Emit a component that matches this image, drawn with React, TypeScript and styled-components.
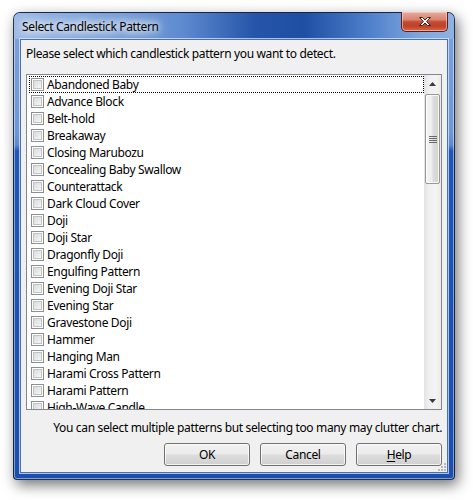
import React from "react";
import styled, { createGlobalStyle } from "styled-components";

const Global = createGlobalStyle`
  html, body { margin: 0; padding: 0; background: #ffffff; }
  body { font-family: "Noto Sans", "Open Sans", sans-serif; }
`;

const Page = styled.div`
  width: 473px;
  height: 500px;
  padding: 12px 0 0 13px;
  box-sizing: border-box;
`;

const Window = styled.div`
  width: 442px;
  height: 468px;
  box-sizing: border-box;
  border: 1px solid rgba(20, 30, 50, 0.85);
  border-radius: 7px 7px 4px 4px;
  padding: 0 6px 6px 6px;
  display: flex;
  flex-direction: column;
  background: linear-gradient(180deg, #7da3dc 0px, #6e97d6 120px, #5c8ad0 132px, #1e57b8 138px, #1a4fae 100%);
  box-shadow: 3px 5px 14px rgba(0, 0, 0, 0.55), inset 0 0 0 1px rgba(255, 255, 255, 0.45);
  position: relative;
`;

const TitleBar = styled.div`
  height: 27px;
  margin: 0 -6px;
  padding-left: 8px;
  display: flex;
  align-items: center;
  border-radius: 6px 6px 0 0;
  background: linear-gradient(90deg, #9dbbe5 0%, #8aaee0 10%, #5f8bd0 38%, #2554a8 55%, #1f4fa3 66%, #4b7dc9 80%, #7ea6de 92%, #8fb2e3 100%);
  position: relative;
`;

const TitleText = styled.span`
  font-size: 12px;
  letter-spacing: -0.35px;
  color: #000;
  line-height: 16px;
  margin-top: 1px;
  text-shadow: 0 0 6px #fff, 0 0 10px #fff, 0 0 14px rgba(255,255,255,0.9), 0 0 18px rgba(255,255,255,0.8);
`;

const CloseButton = styled.div`
  position: absolute;
  top: -1px;
  right: 6px;
  width: 47px;
  height: 20px;
  box-sizing: border-box;
  border: 1px solid #5a2018;
  border-top: none;
  border-radius: 0 0 5px 5px;
  background: linear-gradient(180deg, #e9a99b 0%, #d98573 40%, #c24a33 52%, #c04128 75%, #d36a4e 100%);
  box-shadow: inset 0 0 0 1px rgba(255, 220, 210, 0.55);
  display: flex;
  align-items: center;
  justify-content: center;
`;

const Client = styled.div`
  flex: 1;
  background: #f0f0f0;
  border: 1px solid #4a70ad;
  box-shadow: 0 0 0 1px rgba(220, 232, 248, 0.75);
  padding: 6px 5px 6px 5px;
  display: flex;
  flex-direction: column;
  position: relative;
  font-size: 12px;
  letter-spacing: -0.35px;
  color: #000;
`;

const Prompt = styled.div`
  line-height: 16px;
  height: 16px;
`;

const ListBox = styled.div`
  margin-top: 12px;
  height: 336px;
  box-sizing: border-box;
  border: 1px solid #828790;
  background: #fff;
  display: flex;
  overflow: hidden;
`;

const Items = styled.div`
  flex: 1;
  padding: 1px 0 0 2px;
  overflow: hidden;
  display: flex;
  flex-direction: column;
`;

const Row = styled.div<{ $focused?: boolean }>`
  height: 17px;
  flex: none;
  box-sizing: border-box;
  border: 1px dotted ${(p) => (p.$focused ? "#000" : "transparent")};
  padding-left: 1px;
  display: flex;
  align-items: center;
  gap: 3px;
  line-height: 15px;
  white-space: nowrap;
`;

const Check = styled.span`
  width: 13px;
  height: 13px;
  box-sizing: border-box;
  border: 1px solid #8e8f8f;
  background: #fff;
  padding: 1px;
  display: flex;
  flex: none;
  &::after {
    content: "";
    flex: 1;
    border: 1px solid #c1c3c5;
    background: linear-gradient(135deg, #dcdcdc 0%, #e8e8e8 50%, #f6f6f6 100%);
  }
`;

const ScrollBar = styled.div`
  width: 17px;
  flex: none;
  display: flex;
  flex-direction: column;
  background: linear-gradient(90deg, #e3e3e3 0%, #f0f0f0 30%, #f3f3f3 70%, #ebebeb 100%);
`;

const ArrowButton = styled.div`
  height: 17px;
  flex: none;
  display: flex;
  align-items: center;
  justify-content: center;
`;

const Track = styled.div`
  flex: 1;
  padding: 2px 1px 0 1px;
`;

const Thumb = styled.div`
  height: 90px;
  box-sizing: border-box;
  border: 1px solid #979797;
  border-radius: 2px;
  background: linear-gradient(90deg, #f4f4f4 0%, #ededed 45%, #dcdcdc 55%, #d2d2d2 100%);
  box-shadow: inset 0 0 0 1px rgba(255, 255, 255, 0.8);
  display: flex;
  align-items: center;
  justify-content: center;
`;

const Note = styled.div`
  margin-top: 10px;
  line-height: 16px;
  height: 16px;
  text-align: right;
  white-space: nowrap;
`;

const ButtonRow = styled.div`
  margin-top: 7px;
  display: flex;
  justify-content: flex-end;
  gap: 10px;
`;

const Button = styled.div`
  width: 86px;
  height: 23px;
  box-sizing: border-box;
  border: 1px solid #707070;
  border-radius: 3px;
  background: linear-gradient(180deg, #f2f2f2 0%, #ebebeb 48%, #dddddd 52%, #cfcfcf 100%);
  box-shadow: inset 0 0 0 1px rgba(255, 255, 255, 0.75);
  display: flex;
  align-items: center;
  justify-content: center;
  font-size: 12px;
  line-height: 15px;
`;

const Underline = styled.span`
  text-decoration: underline;
  text-underline-offset: 2px;
`;

const Grip = styled.div`
  position: absolute;
  right: 1px;
  bottom: 1px;
  display: grid;
  grid-template-columns: repeat(3, 2px);
  grid-template-rows: repeat(3, 2px);
  gap: 1px;
`;

const GripDot = styled.span<{ $on: boolean }>`
  width: 2px;
  height: 2px;
  background: ${(p) => (p.$on ? "#b8b8b8" : "transparent")};
`;

const items = [
  "Abandoned Baby",
  "Advance Block",
  "Belt-hold",
  "Breakaway",
  "Closing Marubozu",
  "Concealing Baby Swallow",
  "Counterattack",
  "Dark Cloud Cover",
  "Doji",
  "Doji Star",
  "Dragonfly Doji",
  "Engulfing Pattern",
  "Evening Doji Star",
  "Evening Star",
  "Gravestone Doji",
  "Hammer",
  "Hanging Man",
  "Harami Cross Pattern",
  "Harami Pattern",
  "High-Wave Candle",
];

const gripOn = [false, false, true, false, true, true, true, true, true];

export default function App() {
  return (
    <Page>
      <Global />
      <Window>
        <TitleBar>
          <TitleText>Select Candlestick Pattern</TitleText>
          <CloseButton>
            <svg width="14" height="11" viewBox="0 0 14 11">
              <path
                d="M1.5 1.5 L4.5 1.5 L7 4 L9.5 1.5 L12.5 1.5 L8.5 5.5 L12.5 9.5 L9.5 9.5 L7 7 L4.5 9.5 L1.5 9.5 L5.5 5.5 Z"
                fill="#fff"
                stroke="#4a1a12"
                strokeWidth="1"
                strokeLinejoin="round"
              />
            </svg>
          </CloseButton>
        </TitleBar>
        <Client>
          <Prompt>Please select which candlestick pattern you want to detect.</Prompt>
          <ListBox>
            <Items>
              {items.map((t, i) => (
                <Row key={t} $focused={i === 0}>
                  <Check />
                  <span>{t}</span>
                </Row>
              ))}
            </Items>
            <ScrollBar>
              <ArrowButton>
                <svg width="7" height="4" viewBox="0 0 7 4">
                  <path d="M3.5 0 L7 4 L0 4 Z" fill="#3a3a3a" />
                </svg>
              </ArrowButton>
              <Track>
                <Thumb>
                  <svg width="8" height="7" viewBox="0 0 8 7">
                    <path d="M0 0.5 H8 M0 2.5 H8 M0 4.5 H8 M0 6.5 H8" stroke="#6a6a6a" strokeWidth="1" />
                  </svg>
                </Thumb>
              </Track>
              <ArrowButton>
                <svg width="7" height="4" viewBox="0 0 7 4">
                  <path d="M0 0 L7 0 L3.5 4 Z" fill="#3a3a3a" />
                </svg>
              </ArrowButton>
            </ScrollBar>
          </ListBox>
          <Note>You can select multiple patterns but selecting too many may clutter chart.</Note>
          <ButtonRow>
            <Button>OK</Button>
            <Button>Cancel</Button>
            <Button>
              <span>
                <Underline>H</Underline>elp
              </span>
            </Button>
          </ButtonRow>
          <Grip>
            {gripOn.map((on, i) => (
              <GripDot key={i} $on={on} />
            ))}
          </Grip>
        </Client>
      </Window>
    </Page>
  );
}
